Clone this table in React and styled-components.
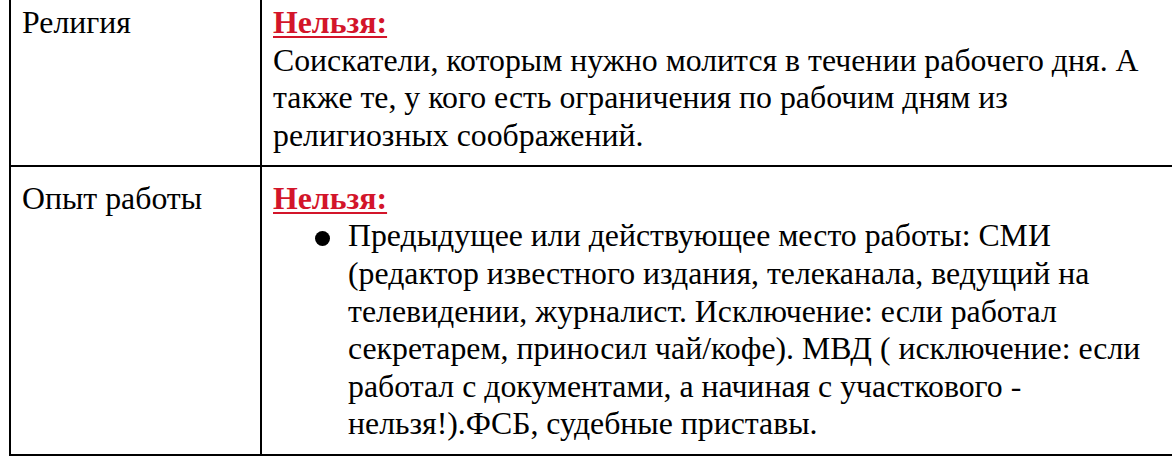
import React from "react";
import styled, { createGlobalStyle } from "styled-components";

const Global = createGlobalStyle`
  html, body {
    margin: 0;
    padding: 0;
    background: #ffffff;
    overflow: hidden;
  }
  body {
    font-family: "Liberation Serif", "Times New Roman", serif;
    color: #000;
  }
`;

const Table = styled.div`
  margin: -11px 0 0 9px;
  width: 1200px;
  border-left: 2px solid #000;
  border-top: 2px solid #000;
  display: grid;
  grid-template-columns: 251px 1fr;
  font-size: 31.8px;
  line-height: 37.6px;
`;

const Cell = styled.div`
  border-right: 2px solid #000;
  border-bottom: 2px solid #000;
  padding: 13px 11px 10.5px 11px;
  min-width: 0;
`;

const Label = styled(Cell)``;

const Content = styled(Cell)`
  white-space: nowrap;
`;

const Forbidden = styled.div`
  font-weight: bold;
  color: #d3152a;
  text-decoration: underline;
  text-decoration-thickness: 2px;
  text-underline-offset: 3px;
`;

const Paragraph = styled.div``;

const List = styled.ul`
  list-style: none;
  margin: 0;
  padding: 0;
`;

const Item = styled.li`
  display: flex;
  align-items: flex-start;
`;

const BulletCol = styled.span`
  flex: 0 0 75px;
  height: 37.6px;
  display: flex;
  align-items: flex-start;
`;

const Dot = styled.span`
  width: 15px;
  height: 15px;
  border-radius: 50%;
  background: #000;
  margin: 14px 0 0 42px;
`;

const ItemText = styled.span`
  flex: 1 1 auto;
  min-width: 0;
`;

const lines = (arr) =>
  arr.map((t, i) => (
    <React.Fragment key={i}>
      {t}
      {i < arr.length - 1 && <br />}
    </React.Fragment>
  ));

export default function App() {
  return (
    <>
      <Global />
      <Table>
        <Label>Религия</Label>
        <Content>
          <Forbidden>Нельзя:</Forbidden>
          <Paragraph>
            {lines([
              "Соискатели, которым нужно молится в течении рабочего дня. А",
              "также те, у кого есть ограничения по рабочим дням из",
              "религиозных соображений.",
            ])}
          </Paragraph>
        </Content>
        <Label>Опыт работы</Label>
        <Content>
          <Forbidden>Нельзя:</Forbidden>
          <List>
            <Item>
              <BulletCol>
                <Dot />
              </BulletCol>
              <ItemText>
                {lines([
                  "Предыдущее или действующее место работы: СМИ",
                  "(редактор известного издания, телеканала, ведущий на",
                  "телевидении, журналист. Исключение: если работал",
                  "секретарем, приносил чай/кофе). МВД ( исключение: если",
                  "работал с документами, а начиная с участкового -",
                  "нельзя!).ФСБ, судебные приставы.",
                ])}
              </ItemText>
            </Item>
          </List>
        </Content>
      </Table>
    </>
  );
}
